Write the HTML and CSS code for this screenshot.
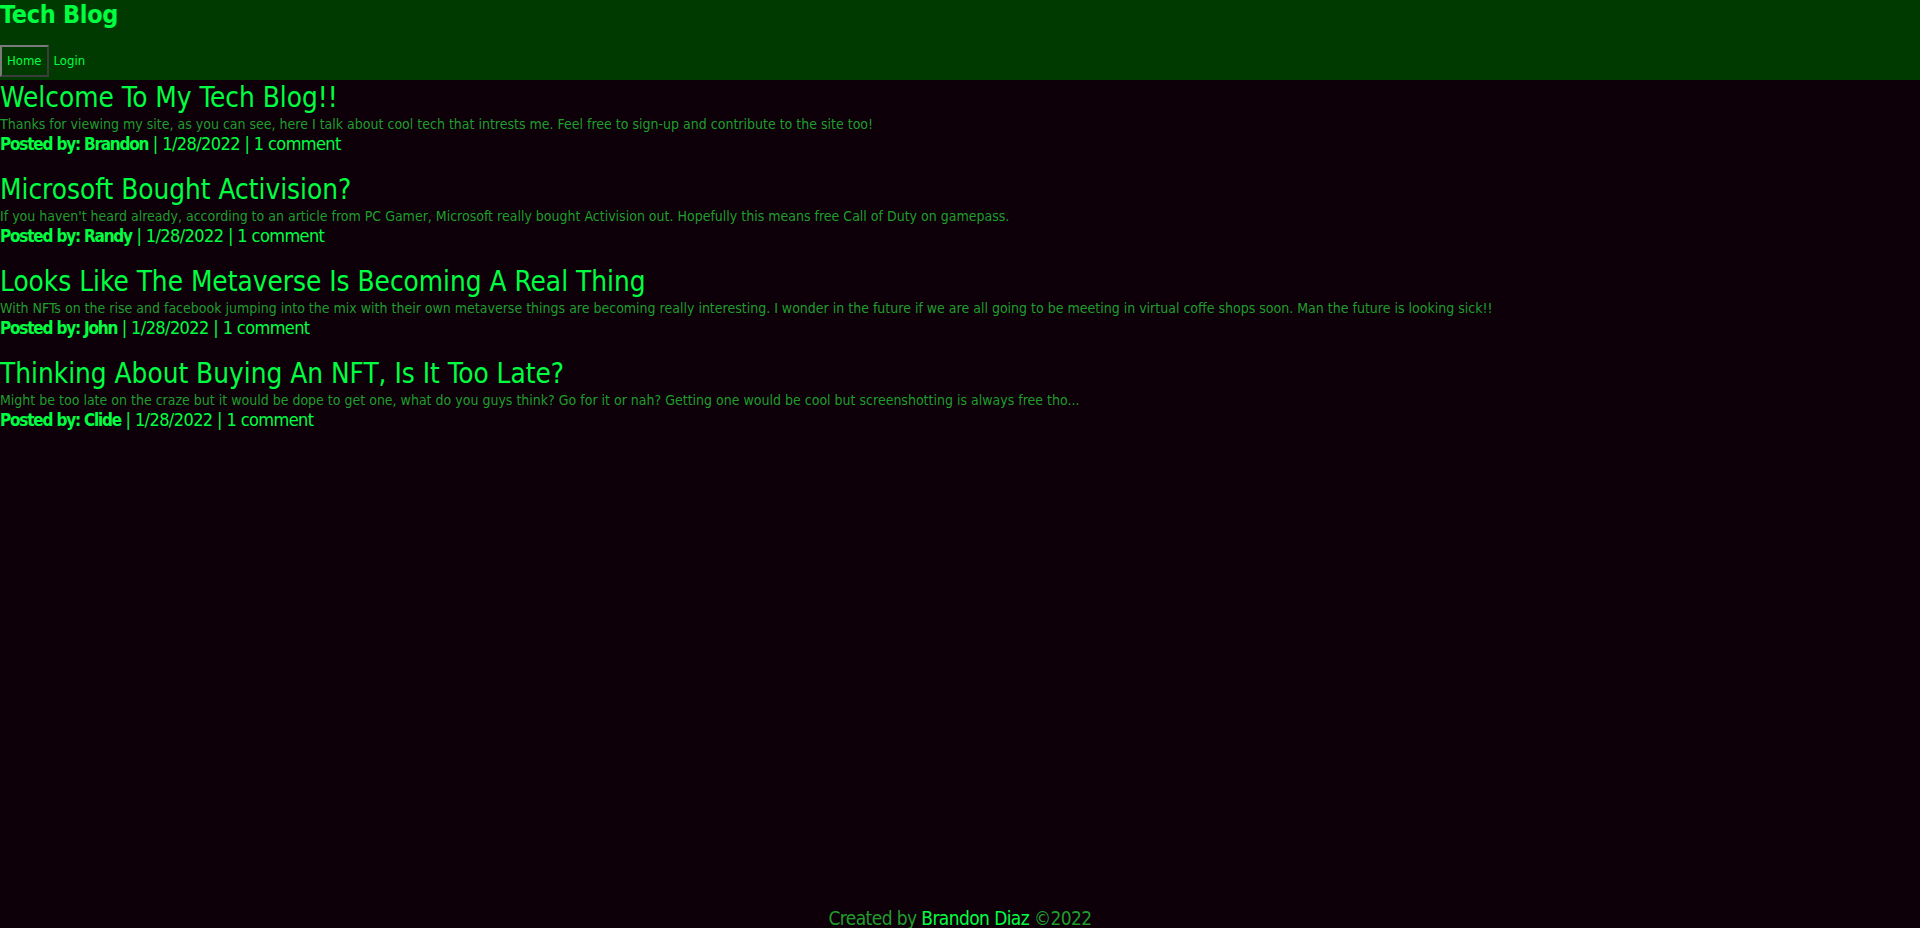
FILE: index.html
```html
<!DOCTYPE html>
<html lang="en">
<head>
<meta charset="utf-8">
<title>Tech Blog</title>
<link rel="stylesheet" href="styles.css">
</head>
<body>
<header class="site-header">
  <h1 class="site-title">Tech Blog</h1>
  <nav class="nav">
    <a class="nav-link active" href="#">Home</a>
    <a class="nav-link" href="#">Login</a>
  </nav>
</header>
<main class="posts">
  <article class="post">
    <h2 class="post-title">Welcome To My Tech Blog!!</h2>
    <p class="post-body">Thanks for viewing my site, as you can see, here I talk about cool tech that intrests me. Feel free to sign-up and contribute to the site too!</p>
    <p class="post-meta"><strong>Posted by: Brandon</strong> | 1/28/2022 | 1 comment</p>
  </article>
  <article class="post">
    <h2 class="post-title">Microsoft Bought Activision?</h2>
    <p class="post-body">If you haven't heard already, according to an article from PC Gamer, Microsoft really bought Activision out. Hopefully this means free Call of Duty on gamepass.</p>
    <p class="post-meta"><strong>Posted by: Randy</strong> | 1/28/2022 | 1 comment</p>
  </article>
  <article class="post">
    <h2 class="post-title">Looks Like The Metaverse Is Becoming A Real Thing</h2>
    <p class="post-body">With NFTs on the rise and facebook jumping into the mix with their own metaverse things are becoming really interesting. I wonder in the future if we are all going to be meeting in virtual coffe shops soon. Man the future is looking sick!!</p>
    <p class="post-meta"><strong>Posted by: John</strong> | 1/28/2022 | 1 comment</p>
  </article>
  <article class="post">
    <h2 class="post-title">Thinking About Buying An NFT, Is It Too Late?</h2>
    <p class="post-body">Might be too late on the craze but it would be dope to get one, what do you guys think? Go for it or nah? Getting one would be cool but screenshotting is always free tho...</p>
    <p class="post-meta"><strong>Posted by: Clide</strong> | 1/28/2022 | 1 comment</p>
  </article>
</main>
<footer class="site-footer">Created by <span class="author">Brandon Diaz</span> ©2022</footer>
</body>
</html>
```

FILE: styles.css
```css
html, body {
  margin: 0;
  padding: 0;
}

body {
  min-height: 100vh;
  display: flex;
  flex-direction: column;
  background: #0d0009;
  color: #00ff41;
  font-family: "DejaVu Sans Condensed", "DejaVu Sans", sans-serif;
}

.site-header {
  background: #003a00;
  padding-bottom: 3px;
}

.site-title {
  margin: 0;
  font-size: 25px;
  line-height: 29px;
  font-weight: bold;
  letter-spacing: -0.3px;
  color: #00ff41;
}

.nav {
  display: flex;
  gap: 5px;
  margin-top: 16px;
}

.nav-link {
  display: block;
  font-size: 13px;
  line-height: 28px;
  color: #00ff41;
  text-decoration: none;
  border: 2px solid transparent;
  padding: 0 5px;
}

.nav-link.active {
  border-color: #7a7a7a #3c3c3c #3c3c3c #7a7a7a;
}

.nav-link + .nav-link {
  border: none;
  padding: 2px 0;
}

.posts {
  flex: 1;
}

.post {
  margin-bottom: 19px;
}

.post-title {
  margin: 0;
  font-size: 27.7px;
  line-height: 35px;
  font-weight: normal;
  color: #00ff41;
}

.post-body {
  margin: 0;
  font-size: 14px;
  line-height: 19px;
  color: #1f9e2c;
}

.post-meta {
  margin: 0;
  font-size: 18px;
  line-height: 19px;
  letter-spacing: -0.6px;
  color: #00ff41;
}

.post-meta strong {
  font-size: 17px;
  line-height: 17px;
  font-weight: bold;
  letter-spacing: -1.2px;
}

.site-footer {
  text-align: center;
  font-size: 19px;
  line-height: 20px;
  letter-spacing: -0.6px;
  color: #1f9e2c;
}

.author {
  color: #00ff41;
}
```
